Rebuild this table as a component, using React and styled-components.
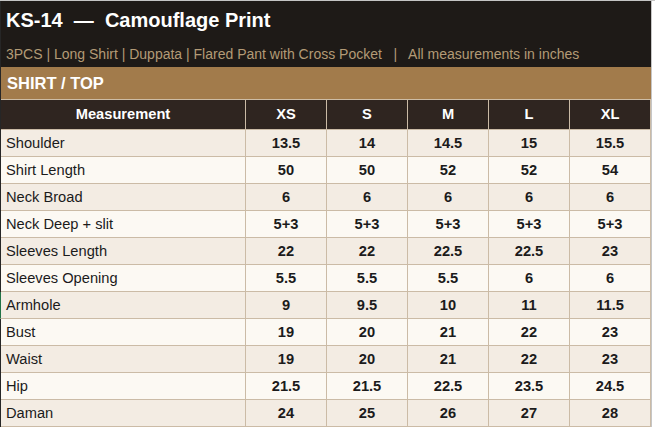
import React from "react";
import styled, { createGlobalStyle } from "styled-components";

const Global = createGlobalStyle`
  html, body { margin: 0; padding: 0; background: #ffffff; }
  body { font-family: "Liberation Sans", Arial, sans-serif; }
`;

const Page = styled.div`
  width: 655px;
  height: 428px;
  overflow: hidden;
  border-top: 1px solid #c4c4c4;
  box-sizing: border-box;
`;

const Sheet = styled.div`
  width: 652px;
  box-sizing: border-box;
  border-left: 1px solid #262626;
  border-right: 1px solid #c6c6c6;
  display: flex;
  flex-direction: column;
`;

const TitleBar = styled.header`
  background: #1e1a17;
  height: 66px;
  box-sizing: border-box;
  padding: 7px 5px 0;
  display: flex;
  flex-direction: column;
`;

const Title = styled.h1`
  margin: 0;
  font-size: 20px;
  line-height: 24px;
  font-weight: 700;
  color: #ffffff;
  white-space: pre;
`;

const Subtitle = styled.p`
  margin: 13px 0 0;
  font-size: 14px;
  line-height: 18px;
  color: #b39b76;
  white-space: pre;
`;

const SectionBand = styled.div`
  background: #a27b4b;
  height: 32px;
  line-height: 32px;
  padding-left: 6px;
  font-size: 16.5px;
  font-weight: 700;
  color: #ffffff;
`;

const Row = styled.div`
  display: grid;
  grid-template-columns: 245px repeat(5, 81px);
  height: ${(p) => (p.$head ? 31 : 27)}px;
  box-sizing: border-box;
  border-top: ${(p) => (p.$head ? "1px solid #cdbda6" : "none")};
  border-bottom: 1px solid #cbbba6;
  background: ${(p) => (p.$head ? "#2f2520" : p.$alt ? "#fcf9f3" : "#f3ece3")};
  margin-left: ${(p) => (p.$marked ? "-1px" : "0")};
  border-left: ${(p) => (p.$marked ? "1px solid #217346" : "none")};
`;

const Cell = styled.div`
  box-sizing: border-box;
  border-right: 1px solid #cbbba6;
  display: flex;
  align-items: center;
  justify-content: ${(p) => (p.$label ? "flex-start" : "center")};
  padding-left: ${(p) => (p.$label ? "5px" : "0")};
  font-size: 14.67px;
  line-height: 17px;
  font-weight: ${(p) => (p.$label ? 400 : 700)};
  color: ${(p) => (p.$head ? "#ffffff" : "#1b1b1b")};
  white-space: nowrap;
`;

const sizes = ["XS", "S", "M", "L", "XL"];

const rows = [
  ["Shoulder", "13.5", "14", "14.5", "15", "15.5"],
  ["Shirt Length", "50", "50", "52", "52", "54"],
  ["Neck Broad", "6", "6", "6", "6", "6"],
  ["Neck Deep + slit", "5+3", "5+3", "5+3", "5+3", "5+3"],
  ["Sleeves Length", "22", "22", "22.5", "22.5", "23"],
  ["Sleeves Opening", "5.5", "5.5", "5.5", "6", "6"],
  ["Armhole", "9", "9.5", "10", "11", "11.5"],
  ["Bust", "19", "20", "21", "22", "23"],
  ["Waist", "19", "20", "21", "22", "23"],
  ["Hip", "21.5", "21.5", "22.5", "23.5", "24.5"],
  ["Daman", "24", "25", "26", "27", "28"],
];

export default function App() {
  return (
    <>
      <Global />
      <Page>
        <Sheet>
          <TitleBar>
            <Title>{"KS-14  —  Camouflage Print"}</Title>
            <Subtitle>
              {"3PCS | Long Shirt | Duppata | Flared Pant with Cross Pocket   |   All measurements in inches"}
            </Subtitle>
          </TitleBar>
          <SectionBand>SHIRT / TOP</SectionBand>
          <Row $head>
            <Cell $head>Measurement</Cell>
            {sizes.map((s) => (
              <Cell $head key={s}>
                {s}
              </Cell>
            ))}
          </Row>
          {rows.map(([label, ...vals], i) => (
            <Row key={label} $alt={i % 2 === 1} $marked={label === "Armhole"}>
              <Cell $label>{label}</Cell>
              {vals.map((v, j) => (
                <Cell key={j}>{v}</Cell>
              ))}
            </Row>
          ))}
        </Sheet>
      </Page>
    </>
  );
}
